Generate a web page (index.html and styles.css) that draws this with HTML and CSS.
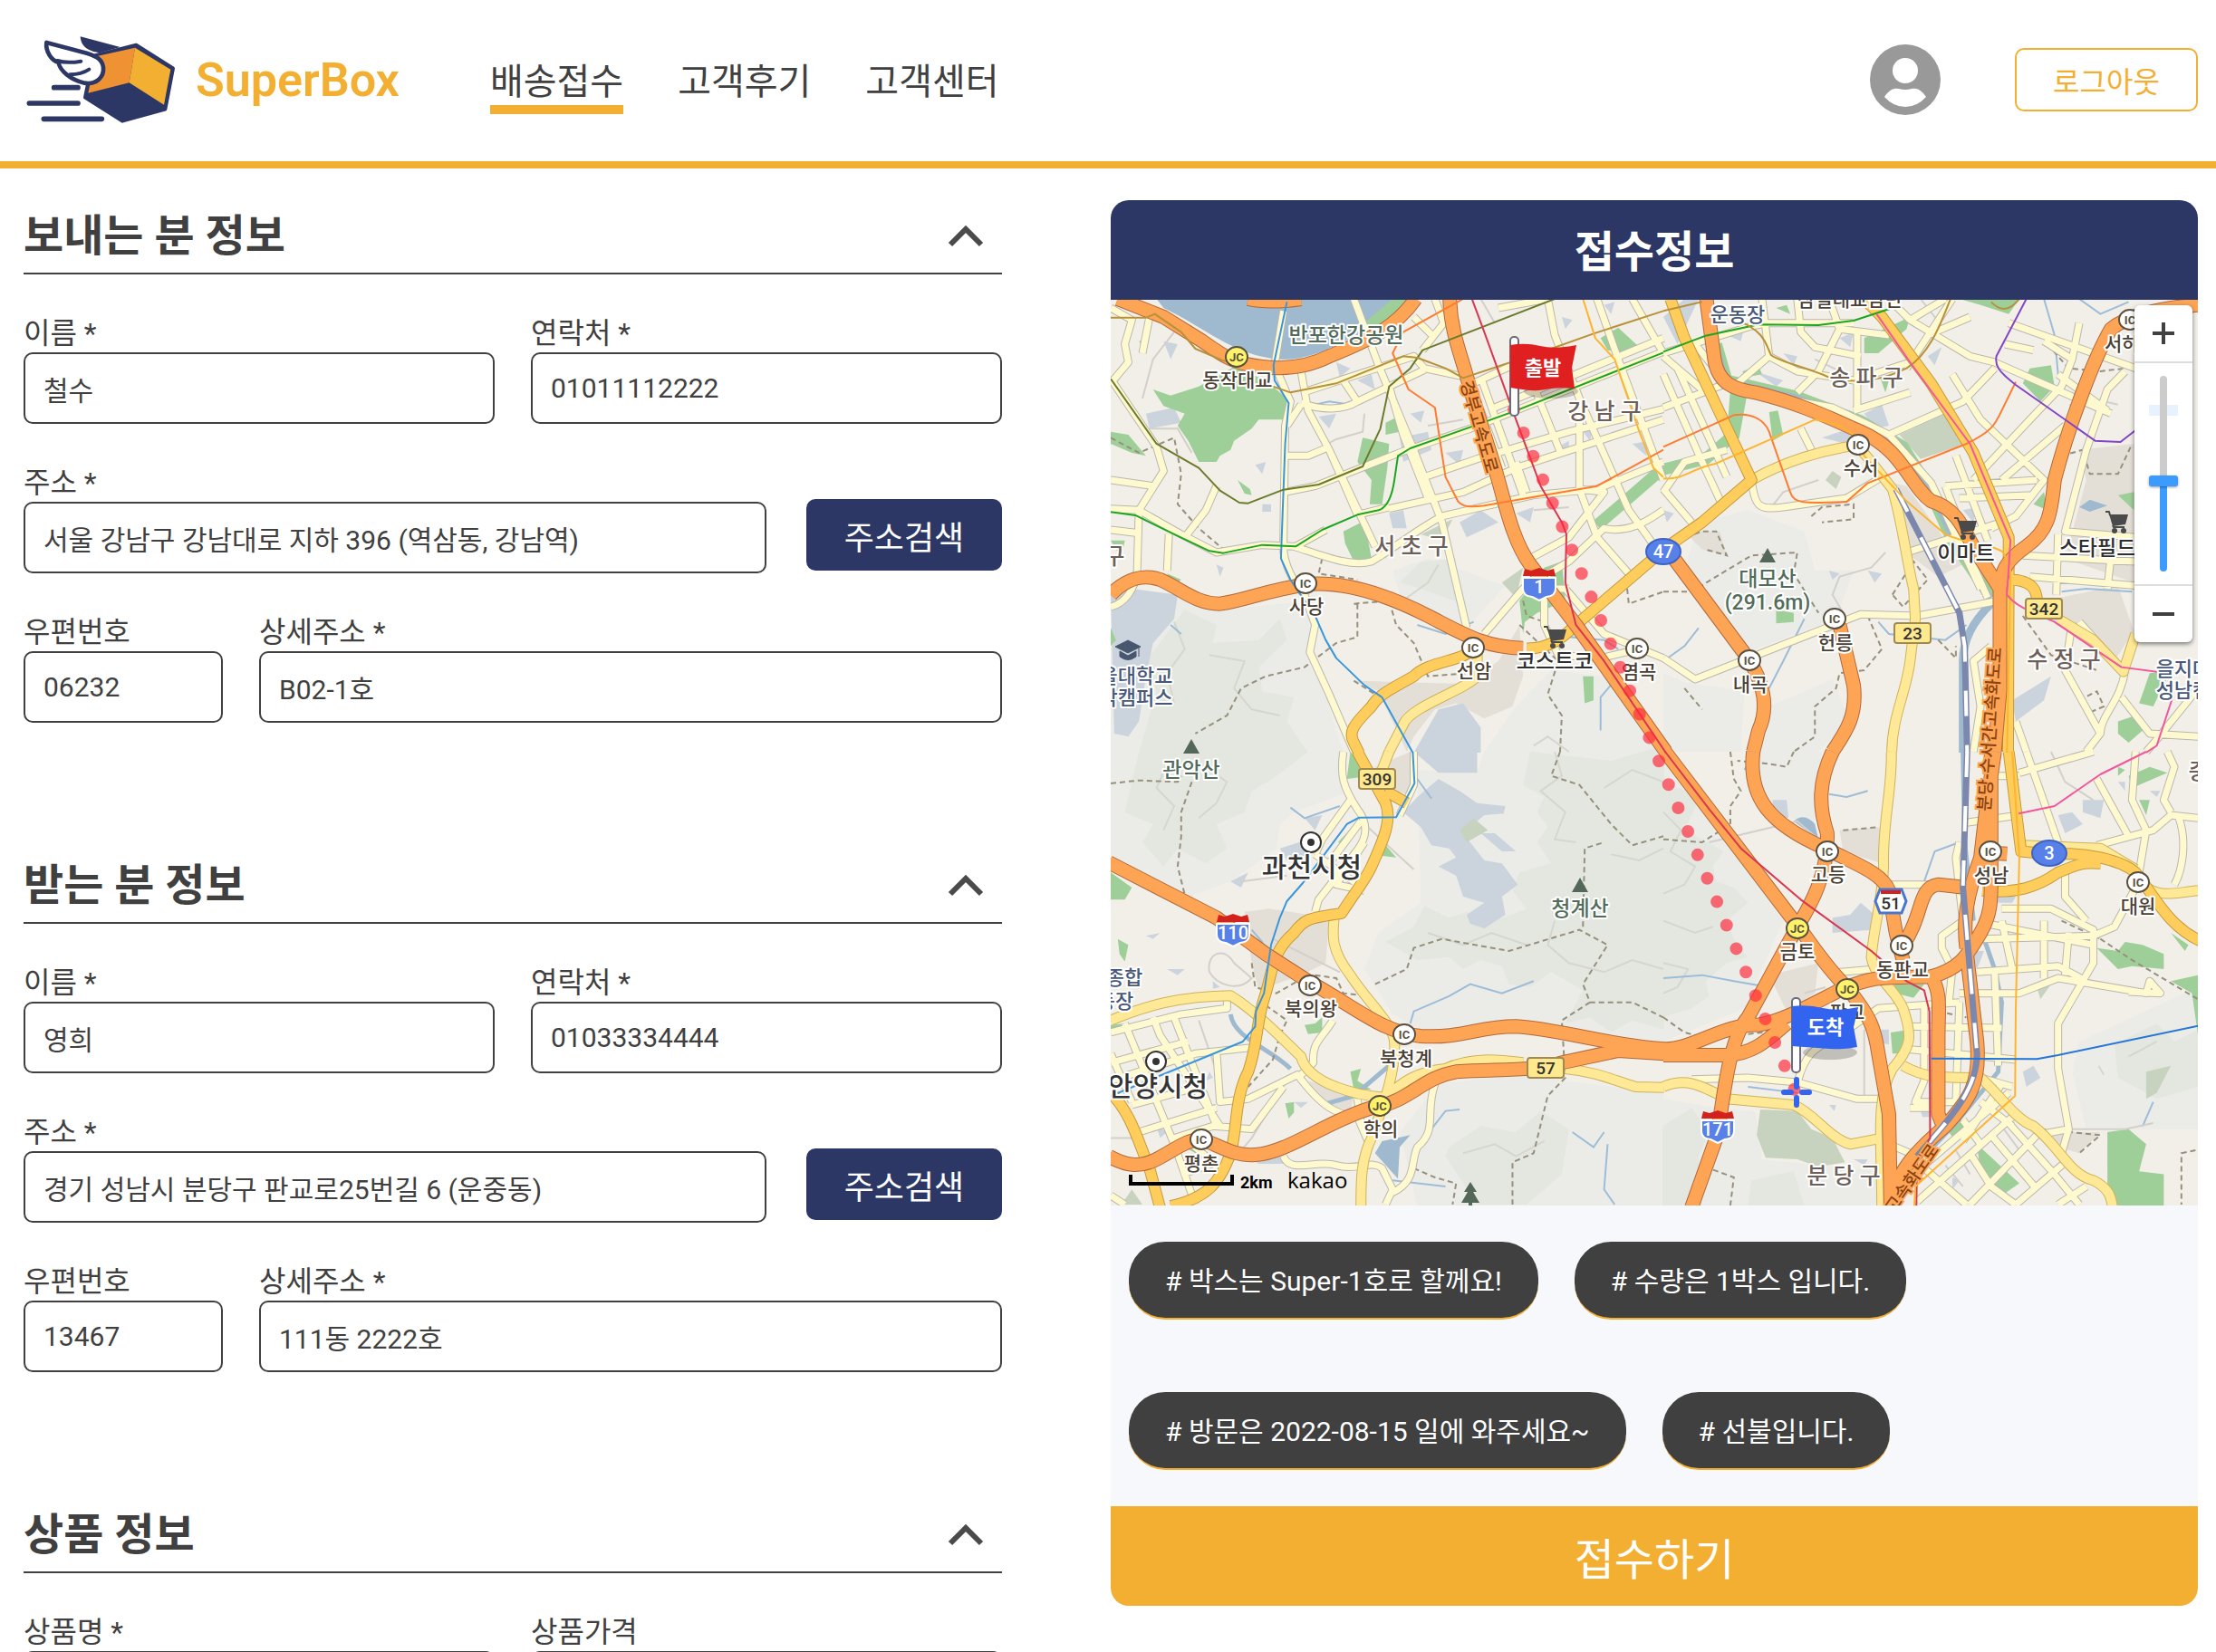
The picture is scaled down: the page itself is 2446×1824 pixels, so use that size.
FILE: index.html
```html
<!DOCTYPE html>
<html lang="ko">
<head>
<meta charset="utf-8">
<meta name="viewport" content="width=device-width, initial-scale=1">
<title>SuperBox - 배송접수</title>
<link rel="stylesheet" href="styles.css">
</head>
<body>
<header class="site-header">
  <a class="brand" href="#">
    <svg class="brand-logo" viewBox="78 52 510 309" aria-hidden="true">
      <path d="M266 62L398 97L330 116C300 112 268 100 266 62Z" fill="#2c3766"/>
      <path d="M310 126L451 90L573 167L547 303L405 342L282 264Z" fill="#2c3766" stroke="#2c3766" stroke-width="12" stroke-linejoin="round"/>
      <path d="M318 128L447 99L428 215L292 249Z" fill="#ef9234"/>
      <path d="M447 99L565 171L543 288L428 215Z" fill="#f3af31"/>
      <path d="M154 82C150 110 170 142 194 148C198 176 236 206 280 216C320 222 345 196 342 164C338 134 312 126 290 118Z" fill="#fff" stroke="#2c3766" stroke-width="14" stroke-linejoin="round"/>
      <path d="M190 142C215 150 245 148 268 144M232 188C258 188 278 182 295 171" fill="none" stroke="#2c3766" stroke-width="12" stroke-linecap="round"/>
      <path d="M179 231H258M97 283H258M145 335H337" stroke="#2c3766" stroke-width="17" stroke-linecap="round"/>
    </svg>
    <span>SuperBox</span>
  </a>
  <nav class="main-nav">
    <a class="active" href="#">배송접수</a>
    <a href="#">고객후기</a>
    <a href="#">고객센터</a>
  </nav>
  <a class="profile" href="#" aria-label="내 정보">
    <svg viewBox="0 0 78 78" aria-hidden="true"><circle cx="39" cy="39" r="39" fill="#999"/><circle cx="39" cy="29" r="14" fill="#fff"/><path d="M16 58C22 49 27 48 32 49Q39 51 46 49C51 48 56 49 62 58Q52 69 39 69T16 58Z" fill="#fff"/></svg>
  </a>
  <button class="logout" type="button">로그아웃</button>
</header>

<main class="page">
  <form class="order-form" id="order">
    <section class="form-section">
      <div class="section-head"><h2>보내는 분 정보</h2>
        <button type="button" aria-label="접기"><svg viewBox="0 0 40 24"><path d="M3 21L20 4L37 21"/></svg></button></div>
      <div class="row halves">
        <div class="field"><label for="s-name">이름 *</label><input id="s-name" value="철수"></div>
        <div class="field"><label for="s-tel">연락처 *</label><input id="s-tel" value="01011112222"></div>
      </div>
      <div class="row address">
        <div class="field"><label for="s-addr">주소 *</label><input id="s-addr" value="서울 강남구 강남대로 지하 396 (역삼동, 강남역)"></div>
        <button class="search" type="button">주소검색</button>
      </div>
      <div class="row detail">
        <div class="field"><label for="s-zip">우편번호</label><input id="s-zip" value="06232"></div>
        <div class="field"><label for="s-detail">상세주소 *</label><input id="s-detail" value="B02-1호"></div>
      </div>
    </section>
    <section class="form-section">
      <div class="section-head"><h2>받는 분 정보</h2>
        <button type="button" aria-label="접기"><svg viewBox="0 0 40 24"><path d="M3 21L20 4L37 21"/></svg></button></div>
      <div class="row halves">
        <div class="field"><label for="r-name">이름 *</label><input id="r-name" value="영희"></div>
        <div class="field"><label for="r-tel">연락처 *</label><input id="r-tel" value="01033334444"></div>
      </div>
      <div class="row address">
        <div class="field"><label for="r-addr">주소 *</label><input id="r-addr" value="경기 성남시 분당구 판교로25번길 6 (운중동)"></div>
        <button class="search" type="button">주소검색</button>
      </div>
      <div class="row detail">
        <div class="field"><label for="r-zip">우편번호</label><input id="r-zip" value="13467"></div>
        <div class="field"><label for="r-detail">상세주소 *</label><input id="r-detail" value="111동 2222호"></div>
      </div>
    </section>
    <section class="form-section">
      <div class="section-head"><h2>상품 정보</h2>
        <button type="button" aria-label="접기"><svg viewBox="0 0 40 24"><path d="M3 21L20 4L37 21"/></svg></button></div>
      <div class="row halves">
        <div class="field"><label for="p-name">상품명 *</label><input id="p-name"></div>
        <div class="field"><label for="p-price">상품가격</label><input id="p-price"></div>
      </div>
    </section>
  </form>

  <aside class="summary">
    <h2>접수정보</h2>
    <div class="map">
      <svg class="map-canvas" viewBox="0 0 1200 1000" preserveAspectRatio="xMinYMin slice">
        <defs>
          <g id="local">
            <g transform="matrix(.389 0 0 .3333 0 -1)">
              <path d="M495 640L580 620L830 505L1020 430L1568 175M790 695L1000 640L1150 560L1568 400M890 590L1040 530L1300 440L1568 365M545 310L860 190L890 230L1010 260M540 345C600 370 660 370 700 340L890 235M690 0L760 220L860 500L940 740L1010 1090M540 240L560 370L620 500L750 820M540 350L500 420M500 520L560 520L620 490M660 270L700 340M620 500L700 715M790 290L830 450L900 660M1050 260L1170 650M990 180L1110 560M1180 230L1280 520M1240 0L1260 120L1330 330L1470 700L1568 860M1090 360L1568 130M1010 290L1140 220M1380 0L1440 200L1568 600M1480 0L1568 180M1100 30L1240 0M920 0L945 80L885 170M860 60L920 130M1150 540L1180 640M1330 330L1330 630"/>
              <path d="M490 40L465 220L510 340L495 420L490 820C490 880 520 940 550 980L580 1080L565 1170L620 1310L690 1500M0 600L120 620M0 695L80 700L200 780L300 840L430 815L520 820C600 850 680 890 740 870C800 830 860 770 940 720L1200 650L1380 630L1568 540M0 30L60 70L40 150L50 210L0 280M110 60L90 180M0 265L130 490L150 570L80 700L75 900C70 960 40 1010 0 1020M160 900L165 780M0 765L70 775M300 620L270 700L210 790M1060 1110L1170 960L1300 870L1400 760C1480 780 1540 720 1568 700M1190 860L1300 790L1400 640L1330 630L1380 790L1470 910M1290 960L1400 1110L1568 1190M1390 1190L1500 1160M1230 980L1230 1080L1270 1180L1390 1190M1170 960L1300 960M525 820L610 765M700 715L790 690"/>
            </g>
            <g transform="matrix(.389 0 0 .3333 610 -1)">
              <path d="M0 180L250 90L300 80L540 80M90 150L180 280L0 360M280 0L300 190L210 280M300 190L380 240L540 270L700 210M380 0L390 110L430 160L560 190M470 0L500 100L640 120M700 70L870 190L940 210L1270 380M870 60L770 110M820 0L690 230M550 110L550 370M380 310L440 240L500 100M540 370L700 310M240 310L480 360L640 450L760 610L900 960M640 450L850 340L940 230M820 250L900 400L1080 600L1000 720L930 760M970 150L1050 170M1080 140L1160 200L1130 290L1040 400L880 600M980 80L1340 230M1310 240L1260 300L1200 500L1140 770L1340 790M1120 780L1115 980M1040 920L1340 950M1020 850L1340 870M1270 850L1260 960M1140 420L960 600M800 620L1060 600M840 660L1050 650M830 520L920 800M800 620L860 800M690 840L960 740M1180 80L1160 200M1120 250L1260 370M640 0L700 70L800 0M40 230L180 590M0 250L110 540L170 690M0 190L110 300M0 640L60 540L180 500"/>
              <path d="M0 1190L90 1260L560 1045L720 1050L860 1020L950 1000M0 630L80 740M250 600C260 690 270 700 340 690L520 660L620 590M390 430L420 500M930 1150L880 1200L900 1350L880 1500M1160 1070L1140 1230L1240 1440L1200 1500M1240 1440C1240 1380 1300 1330 1310 1230M1300 1320L1380 1440L1517 1450M1517 1290L1400 1460L1370 1500M840 780L920 990M1000 1400L1030 1500M1180 1070L1280 1200"/>
            </g>
            <g transform="matrix(.389 0 0 .3333 0 499)">
              <path d="M660 0C650 80 660 120 700 190C740 250 720 300 690 340L590 490L580 530M680 160L600 290L580 340M710 230L620 370M720 300L640 440L720 460M580 340L720 455M860 0L860 110L820 210M0 930L200 870L330 850L330 800M0 1030L220 960M0 1090L240 1000L400 980M60 1170L250 1110M80 1260L300 1180M40 900L180 1300L240 1500M120 880L140 940L310 1240M180 880L300 1240M300 990L310 1160L390 1150L530 1070C600 1180 640 1200 700 1210L730 1290M490 1110L400 1250L290 1240L180 1280M230 1300L280 1350M0 1000L60 1160M630 890C600 950 570 960 575 1030L540 1070M490 1340C510 1400 580 1350 640 1370C700 1390 740 1350 770 1380L800 1450L780 1500M920 1100C890 1200 930 1250 870 1310C850 1360 870 1420 800 1460M0 1470L40 1500M200 1400L300 1360M700 1150L710 1230"/>
            </g>
            <g transform="matrix(.389 0 0 .3333 610 499)">
              <path d="M80 1085L240 1080L380 1095L550 1150L610 1150M380 1100C400 1000 430 980 500 940L610 850L840 830M640 440L860 440M500 730L600 720M740 840L740 1090L715 1160L830 1160L840 830M690 910L960 915M690 985L1000 1020M940 720L950 1040M890 730L1120 710L1200 760M840 800L1010 800L1120 750L1370 800L1380 760L1410 800L1320 795M960 520L1100 520L1220 590L1220 700L1120 900L1120 1050L1150 1250L1130 1330M920 570L1220 640M900 620L1220 610M1080 560L1080 750M1150 600L1140 740M960 560L990 720M1140 380L1140 480L1200 560M1220 610L1280 580L1340 450M1010 70L1220 0M1030 0L1120 300M1230 90L1320 280M1340 0L1330 160L1370 260L1350 400M1230 310L1390 260L1440 210L1517 220M1460 210C1490 300 1470 400 1450 440M1430 0L1450 50L1420 160L1440 200M860 235L1010 210M930 80L1010 80M840 300L830 350L850 560L790 610L790 650L820 720L810 830"/>
              <path d="M740 1370L980 1130M720 1490L1000 1200M870 1330L930 1440L1000 1500M980 1230L1110 1400L1180 1500M850 1290L960 1100M640 1300L720 1340M870 1500L1060 1270L1150 1250M1000 1500L1140 1360M740 1380L860 1500M1120 1500L1200 1440M930 1270L1060 1450M900 1160L990 1240M850 1220L900 1300M770 1180L700 1180M900 1080L990 1110"/>
            </g>
          </g>
          <g id="sub">
            <path transform="matrix(.389 0 0 .3333 0 -1)" d="M1040 1170L1040 1250C1000 1300 850 1350 830 1410L790 1500"/>
            <path transform="matrix(.389 0 0 .3333 610 -1)" d="M250 600C340 540 450 500 550 485L590 540L650 630C680 750 690 870 710 960L715 1060L700 1200C690 1300 650 1380 648 1500M1120 1060L1220 1130L1305 1235L1340 1110"/>
            <path transform="matrix(.389 0 0 .3333 0 499)" d="M790 0L770 60M635 540C630 600 620 650 680 740C730 830 800 900 805 960C810 1050 780 1150 740 1280C710 1350 710 1420 710 1510M0 890C100 840 200 810 340 808C400 850 470 930 540 1010C560 1100 700 1140 780 1145C830 1090 870 1060 950 1050C1020 1010 1100 1020 1170 1030M1290 1050C1380 1060 1430 1090 1490 1110L1570 1112"/>
            <path transform="matrix(.389 0 0 .3333 610 499)" d="M647 0C650 120 620 250 625 380C620 500 600 560 590 680C600 750 660 790 680 850C710 950 700 980 650 1050C600 1150 620 1300 620 1510M0 1110C60 1080 100 1100 180 1150L370 1170C430 1200 470 1280 530 1300L620 1280M680 1040C740 1080 780 1080 900 1080C950 1130 1000 1220 1050 1240C1120 1300 1150 1400 1220 1420C1270 1450 1270 1480 1275 1510M1340 420C1400 490 1430 470 1517 460M1020 310L1240 320L1340 390"/>
          </g>
          <g id="trunk">
            <path transform="matrix(.389 0 0 .3333 0 -1)" d="M1180 1158C1260 1160 1300 1100 1330 1070L1570 830M1020 1165C1000 1200 900 1200 860 1250C800 1290 760 1310 740 1350C700 1400 670 1430 690 1470L705 1505"/>
            <path transform="matrix(.389 0 0 .3333 610 -1)" d="M20 0L60 130L250 600L110 740L0 830M570 0L620 60L760 280L880 510L980 790L978 1500M980 930C1050 930 1060 970 1060 1000"/>
            <path transform="matrix(.389 0 0 .3333 0 499)" d="M700 0L780 170C800 230 770 300 740 380C720 430 690 470 655 535C570 550 550 550 520 600C460 660 460 720 440 800C410 900 420 960 390 1060C350 1150 360 1250 340 1330C310 1430 270 1480 170 1505M780 130L840 170M0 1130C60 1200 80 1300 110 1380L140 1510"/>
            <path transform="matrix(.389 0 0 .3333 610 499)" d="M980 0L1015 330L1100 340C1200 330 1300 360 1340 400C1390 470 1430 580 1530 630M905 460C1000 470 1060 450 1120 400C1200 360 1200 370 1240 370"/>
          </g>
          <g id="express">
            <path transform="matrix(.389 0 0 .3333 0 -1)" d="M20 0L150 60L260 140C320 190 350 215 430 225C500 235 560 225 620 190C700 150 800 110 865 0M390 0Q450 15 540 0M962 0C965 120 1000 200 1020 300L1090 560C1120 680 1140 800 1190 880L1320 1080L1575 1500M0 980C40 930 90 910 140 930C200 960 240 1010 310 1010C380 1000 440 965 560 945C680 935 800 990 900 1050C1000 1110 1060 1155 1170 1157"/>
            <path transform="matrix(.389 0 0 .3333 610 -1)" d="M122 0L145 200C155 280 200 300 260 310C400 350 480 400 560 440C680 500 700 620 760 670C850 700 860 800 900 860L955 960L955 1300L940 1500M1517 20C1400 30 1310 60 1270 100C1220 200 1150 420 1110 600C1100 720 1090 770 1030 820C970 870 960 900 955 960M30 860L240 1190C300 1300 290 1380 270 1430L255 1500M500 1080L540 1280C550 1380 520 1430 480 1500"/>
            <path transform="matrix(.389 0 0 .3333 0 499)" d="M-5 367L300 550L440 670L560 760C700 850 770 930 880 942C1000 950 1040 910 1150 910C1280 920 1400 970 1570 985M-5 1340C40 1370 80 1380 130 1350C180 1320 220 1280 260 1285C320 1310 350 1340 410 1335C500 1330 620 1220 740 1180C850 1160 880 1080 980 1060C1100 1050 1200 1060 1280 1030L1440 990L1570 1000"/>
            <path transform="matrix(.389 0 0 .3333 610 499)" d="M5 0L370 560C400 600 450 700 520 780C590 880 600 920 610 1000L640 1200L645 1510M255 0C240 150 300 240 460 320C540 370 620 400 640 460L660 600L680 690M480 0C440 100 440 180 465 270C470 420 400 540 380 580L240 880C180 960 170 1180 150 1280L80 1510M0 985C80 990 170 900 270 905C340 890 400 850 500 790C600 740 620 750 760 745C840 720 860 680 900 600C930 540 930 490 930 430L930 0M940 0L915 200L900 350C860 480 850 560 860 650M0 1005L180 1005C260 1000 300 950 350 900M680 640C740 540 720 450 780 440L860 450M930 335L975 338M760 745C790 800 780 850 780 950L780 1200L790 1230M860 660L890 960C900 1100 870 1150 800 1240C720 1320 650 1400 650 1510"/>
          </g>
          <g id="rail">
            <path transform="matrix(.389 0 0 .3333 610 -1)" d="M660 630L840 1040L855 1150L862 1503"/>
            <path transform="matrix(.389 0 0 .3333 610 499)" d="M862 0L850 450L890 1000C890 1130 800 1230 720 1340"/>
          </g>
          <g id="ic"><ellipse rx="12" ry="11" fill="#fff" stroke="#5a5140" stroke-width="2"/><text class="ic-text" y="5">IC</text></g>
          <g id="jc"><ellipse rx="12" ry="11" fill="#fff36b" stroke="#5a5140" stroke-width="2"/><text class="ic-text" y="5">JC</text></g>
          <path id="peak" d="M0 -8L9 8H-9Z" fill="#54685a"/>
          <g id="cart"><path d="M-12 -11H-8L-7 -7M-4 4L-3 6H9" fill="none" stroke="#4a4a4a" stroke-width="2"/><path d="M-8 -8H13L10 3L-4 5Z" fill="#4a4a4a"/><circle cx="-2" cy="10" r="3" fill="#4a4a4a"/><circle cx="8" cy="10" r="3" fill="#4a4a4a"/></g>
          <g id="hall"><circle r="11" fill="#fff" stroke="#333" stroke-width="2"/><circle r="4" fill="#333"/></g>
          <g id="shield"><path d="M-18 -6H18V6Q18 14 8 15L0 19L-8 15Q-18 14 -18 6Z" fill="#5780e8" stroke="#fff" stroke-width="2"/><path d="M-18 -8L-16 -16L-9 -14L0 -17L9 -14L16 -16L18 -8Z" fill="#d3221d"/></g>
        </defs>

        <rect width="1200" height="1000" fill="#f2efe9"/>

        <g class="hills">
          <path transform="matrix(.389 0 0 .3333 0 -1)" d="M190 990L330 1030L560 1000L570 1170L660 1500H0V1100ZM800 900L900 860L1000 900L1120 950L1010 1090L820 980ZM1250 1230L1400 1250L1568 1500H1060L1150 1350Z"/>
          <path transform="matrix(.389 0 0 .3333 610 -1)" d="M100 740L240 700L400 770L430 900L540 900L490 1060L240 1170L60 900ZM60 1270L230 1300L220 1500H0V1240ZM300 1350L480 1260L530 1400L440 1500H280Z"/>
          <path transform="matrix(.389 0 0 .3333 0 499)" d="M0 0H650L660 140L520 200L480 240L470 320L340 430L220 480L0 350ZM870 60L1040 70L1060 0H1568V960L1150 900L880 920L800 870L720 720L760 600L880 500ZM820 1260L930 1100L1150 1070L1568 1130V1503H870Z"/>
          <path transform="matrix(.389 0 0 .3333 610 499)" d="M0 0L180 280L340 560L230 850L0 960ZM240 0H450L430 250L300 190ZM1180 960L1517 780V1250L1200 1250L1160 1060ZM0 1150L150 1180L260 1190L280 1350L620 1390V1503H0Z"/>
        </g>
        <g class="hills-deep">
          <path transform="matrix(.389 0 0 .3333 0 -1)" d="M210 1030L300 1080L290 1140L420 1130L480 1060L500 1130L420 1220L430 1300L520 1320L500 1400L560 1503H80L130 1300L100 1200ZM820 940L880 870L980 860L970 960L1000 1010L880 960Z"/>
          <path transform="matrix(.389 0 0 .3333 0 499)" d="M80 0H560L460 90L400 130L380 200L300 240L330 320L270 370L190 320L150 380L90 300L120 240L40 200L60 100ZM1190 0L1420 30L1570 -20V920L1480 890L1420 930L1360 880L1290 900L1340 790L1250 730L1190 780L1130 770L1110 710L1050 690L1000 720L960 680L870 690L780 630L860 580L890 510L960 550L1010 530L1090 560L1180 520L1140 460L1160 400L1250 370L1210 300L1240 250L1210 200L1230 150L1170 110ZM960 1310L1050 1240L1150 1260L1220 1190L1300 1250L1280 1400L1180 1500H1040L950 1340Z"/>
          <path transform="matrix(.389 0 0 .3333 610 499)" d="M-2 130L50 120L100 160L60 260L110 290L170 330L140 380L150 430L200 450L240 500L180 560L200 620L240 680L180 700L120 760L130 810L80 850L-2 880ZM1280 970L1400 900L1450 960L1517 920V1110L1400 1150L1290 1080ZM-2 1240L80 1180L130 1260L100 1340L110 1503H-2ZM250 1420L370 1390L400 1503H240Z"/>
        </g>
        <g class="contour">
          <path transform="matrix(.389 0 0 .3333 0 -1)" d="M180 1070L210 1160L160 1240L180 1340M280 1180L380 1200L350 1290L400 1360L480 1380M840 990L900 940L930 880M1200 1480L1240 1450L1300 1500"/>
          <path transform="matrix(.389 0 0 .3333 0 499)" d="M1260 0L1280 80L1220 130L1290 200L1260 290L1320 300M1400 120L1480 60L1568 100M1420 340L1500 360L1568 320M900 600L1000 640L1080 600L1180 640M1260 560L1240 640L1300 700L1400 730L1480 690L1568 720M160 40L130 120L180 180L150 260M280 60L330 100L300 170L250 220M1000 1330L1090 1300L1150 1340L1230 1290"/>
          <path transform="matrix(.389 0 0 .3333 610 499)" d="M0 200L50 260L20 330L90 380L60 440L0 470M0 560L90 600L140 580M0 700L70 720L40 780L0 800M1320 1010L1400 960M1235 1040L1250 1070"/>
        </g>
        <g class="soil">
          <path transform="matrix(.389 0 0 .3333 0 -1)" d="M690 1265L1000 1275L1100 1200L1160 1080L1170 1250L1140 1350L1060 1390L980 1340L920 1360L860 1450L840 1500L760 1300Z"/>
          <path transform="matrix(.389 0 0 .3333 610 -1)" d="M1180 500L1335 480V940L1140 860L1200 600ZM650 610L690 620L850 880L780 920L700 850ZM1040 1010L1290 950L1335 1100L1280 1200L1100 1060ZM60 770L160 770L180 850L110 830Z"/>
          <path transform="matrix(.389 0 0 .3333 0 499)" d="M380 530L450 520L620 550L610 700L540 740L420 790L400 700ZM750 50L850 0L850 140L780 130ZM560 1090L690 1140L680 1190L600 1160Z"/>
          <path transform="matrix(.389 0 0 .3333 610 499)" d="M500 260L620 250L620 370L510 330ZM1080 1260L1240 1260L1180 1330L1120 1310ZM300 740L440 700L430 800L350 860Z"/>
        </g>
        <g class="lake">
          <path transform="matrix(.389 0 0 .3333 0 -1)" d="M0 980L60 960L190 980L180 1060L120 1140L100 1250L80 1400L50 1450L10 1440ZM860 1503L930 1360L1000 1340L1050 1420L1050 1503ZM100 380L180 360L200 410L110 430ZM820 460L900 440L910 500L830 540ZM990 740L1050 700L1100 740L1010 790ZM790 710L830 700L840 760L800 760ZM700 270L740 250L750 300ZM590 390L640 380L620 430ZM150 140L190 150L170 200ZM850 380L890 370L880 410ZM950 510L1000 500L990 550ZM1280 60L1310 70L1290 100ZM1400 20L1430 10L1420 50ZM1480 480L1530 470L1520 520ZM1150 710L1200 690L1190 740ZM430 680L455 680V705H430ZM300 880L320 890L310 920ZM250 340L290 350L270 370ZM640 210L680 230L650 260ZM1340 440L1370 420L1360 470ZM1270 490L1300 470L1300 510ZM410 550L440 540L430 580Z"/>
          <path transform="matrix(.389 0 0 .3333 610 -1)" d="M0 60L60 0H100L40 150ZM500 440L550 430L520 480L450 460ZM570 380L620 350L640 420L600 430ZM500 130L540 110L530 160ZM750 190L790 160L770 220ZM990 1330L1100 1250L1080 1330L1000 1400ZM580 900L620 910L600 940ZM850 700L890 690L880 740ZM340 180L380 190L370 220ZM260 240L340 270L320 290ZM180 120L230 90L220 140ZM1150 350L1180 340L1170 380ZM0 700L30 710L10 740ZM470 900L500 910L480 930Z"/>
          <path transform="matrix(.389 0 0 .3333 0 499)" d="M830 200L870 150L930 90L990 130L1040 170L1120 180L1115 205L1060 210L1000 270L1060 360L1110 370L1155 440L1110 480L1120 540L1060 585L1020 570L1010 540L1060 500L1000 480L980 410L930 380L980 350L960 320L910 310L880 250ZM860 0H1040V70H930ZM1050 270L1090 270L1150 330L1110 330ZM480 320L560 290L550 370L500 360ZM340 430L390 400L370 450ZM550 220L600 210L580 260ZM100 610L140 600L120 620ZM160 720L210 720L190 740ZM290 760L310 780L290 785ZM400 1350L490 1340L500 1365L420 1365ZM130 1240L160 1260L140 1280ZM520 1160L560 1160L540 1180ZM280 1060L290 1080L270 1090Z"/>
          <path transform="matrix(.389 0 0 .3333 610 499)" d="M480 550L530 540L560 500L600 540L590 590L480 600ZM310 160L350 160L355 220L310 210ZM1120 210L1160 200L1190 240L1140 270ZM1190 160L1250 160L1240 220L1190 200ZM860 660L910 660L890 720ZM1020 1060L1050 1040L1070 1080L1030 1110ZM600 920L640 920L640 970L600 960ZM730 1190L755 1190L755 1210L735 1210ZM540 1350L580 1350L570 1370ZM1290 100L1310 100L1310 130ZM1380 130L1410 130L1400 150ZM470 1170L490 1170L485 1190ZM940 470L1000 480L990 500H950ZM820 1410L840 1420L820 1450Z"/>
        </g>
        <g class="water">
          <path transform="matrix(.389 0 0 .3333 0 -1)" d="M130 0H850C800 80 730 110 680 130C600 180 540 205 480 200C350 190 260 90 150 30Z"/>
          <path transform="matrix(.389 0 0 .3333 0 499)" d="M770 1290L850 1270L820 1310L815 1415L750 1330Z"/>
          <path transform="matrix(.389 0 0 .3333 610 499)" d="M370 230Q400 200 430 240L440 290ZM1300 1310L1340 1340L1300 1450L1280 1400Z"/>
          <path transform="matrix(.389 0 0 .3333 610 -1)" d="M1180 690L1210 665L1260 685L1210 705Z"/>
        </g>
        <g class="park">
          <path transform="matrix(.389 0 0 .3333 0 -1)" d="M120 300L170 320L250 290L350 225L440 270L510 340L490 400L420 400L400 430L350 470L340 500L310 520L300 540L250 540L220 470L190 420L210 380L150 355ZM715 460L790 480L785 560L770 680L735 680L740 600L700 540ZM780 410L815 390L820 440L780 450ZM660 770L720 735L740 860L690 870L665 810ZM1390 130L1440 95L1500 160L1480 180L1410 170ZM1160 1000L1230 890L1280 870L1290 1000L1210 1040L1175 1070L1170 1110ZM360 600L395 630L400 650L380 645ZM0 440L50 450L100 520L60 510L0 480ZM80 140L110 130L100 170ZM700 100L800 0L840 0L790 70L720 110ZM1340 1250L1370 1250L1370 1330L1345 1340ZM0 1090L15 1130L0 1150ZM0 800L40 800L30 860ZM160 910L200 930L180 950Z"/>
          <path transform="matrix(.389 0 0 .3333 610 -1)" d="M570 130L700 60L690 100L610 180H570ZM1020 280L1040 230L1100 220L1110 290L1070 340ZM840 0H1010L980 50L900 20ZM300 375L325 370L340 450L310 470ZM320 1030L370 1040L370 1070L320 1075ZM1350 1340L1380 1240L1440 1230L1390 1350ZM1290 1400L1340 1380L1360 1430L1320 1470L1290 1440ZM225 240L270 220L280 250L230 260ZM320 30L350 20L360 50ZM615 260L640 270L630 310ZM1050 680L1080 640L1090 700ZM1290 650L1335 640V700ZM190 300L230 330L215 420L180 450Z"/>
          <path transform="matrix(.389 0 0 .3333 0 499)" d="M0 400L60 450L40 490H0ZM680 0L710 30L740 80L670 90ZM710 220L670 310L645 300ZM780 310L810 350L770 345ZM550 905L580 900L600 880L600 930L560 935ZM20 620L50 640L40 695L25 670ZM495 1165L520 1160L520 1195L505 1215ZM680 1060L710 1050L700 1090L740 1120L690 1120ZM210 1310L260 1310L240 1330ZM0 905L40 900L0 930Z"/>
          <path transform="matrix(.389 0 0 .3333 610 499)" d="M1230 650L1290 660L1310 630L1360 640L1420 670V720L1330 710L1290 720ZM1440 760L1517 740V940L1500 800ZM1440 600L1490 640L1480 660ZM1260 1260L1320 1250L1370 1300L1350 1390L1420 1400V1503H1290L1260 1450ZM890 1300L1010 1430L960 1470L900 1400ZM655 770L740 770L710 815L660 800ZM645 930L700 920L690 1000L650 1000ZM1320 80L1380 50L1430 70L1330 120ZM1350 160L1380 160L1370 210ZM810 1260L840 1210L860 1250L830 1290ZM1290 50L1310 60L1290 80Z"/>
        </g>
        <g class="meadow">
          <path transform="matrix(.389 0 0 .3333 610 -1)" d="M670 450L820 370L860 480L730 530ZM460 600L480 570L505 590L490 630Z"/>
          <path transform="matrix(.389 0 0 .3333 0 -1)" d="M1110 940L1170 890L1150 990ZM880 780L970 730L940 800Z"/>
          <path transform="matrix(.389 0 0 .3333 0 499)" d="M990 260L1030 220L1070 260L1010 300ZM30 1500L60 1450L90 1500Z"/>
          <path transform="matrix(.389 0 0 .3333 610 499)" d="M275 1185L380 1190L420 1250L480 1280L515 1360L440 1375L380 1350L290 1345L265 1270ZM1370 1060L1440 1040L1400 1130L1370 1150ZM1060 780L1100 770L1070 820Z"/>
        </g>

        <g class="riverside" transform="matrix(.389 0 0 .3333 610 -1)">
          <path class="bank" d="M150 150L180 270L380 325L560 405L680 490L750 620L820 800L930 990M0 565L120 530L200 450L220 320"/>
          <path class="stream" d="M150 150L180 270L380 325L560 405L680 490L750 620L820 800L930 990"/>
          <path class="stream wide" d="M930 1010Q850 1100 850 1200V1503"/>
        </g>
        <path class="bank" transform="matrix(.389 0 0 .3333 0 -1)" d="M1568 560L1470 660L1380 750"/>
        <g class="stream">
          <path transform="matrix(.389 0 0 .3333 0 499)" d="M340 870C350 950 450 980 510 1050M600 1170L690 1140L790 1040"/>
          <path transform="matrix(.389 0 0 .3333 610 499)" d="M850 0L855 300L880 560M910 620L940 720L960 830L950 1060L830 1230L740 1340"/>
        </g>
        <g class="creek">
          <path transform="matrix(.389 0 0 .3333 0 499)" d="M510 185L550 220L650 180M850 900L860 860L960 810L1020 770L1110 800L1200 760M400 590L430 630L440 670M910 1250L950 1190L990 1185M1310 1260L1370 1310L1400 1260M1410 1300L1400 1450L1430 1500M870 90L910 155M800 1420L950 1440"/>
          <path transform="matrix(.389 0 0 .3333 610 499)" d="M470 140L520 150L580 130M740 430L770 330L840 300M230 60L260 0M0 750L110 740L200 760L300 780M1360 1240L1390 1160M240 1110L380 1130"/>
          <path transform="matrix(.389 0 0 .3333 610 -1)" d="M100 1090L60 1150L0 1200M400 1060L340 1200L300 1290M1080 0L1110 120L1120 250M610 1070L640 1110L800 1130L860 1080M1130 970L1200 960L1330 970M1180 0L1240 50L1320 10"/>
          <path transform="matrix(.389 0 0 .3333 0 -1)" d="M870 1080L950 1110L1030 1070M1300 1120L1400 1130L1440 1160M170 1080L200 1110M1440 1250L1390 1320L1390 1430M580 350L620 340L680 350"/>
        </g>
        <g class="minor">
          <path transform="matrix(.389 0 0 .3333 0 -1)" d="M110 430L190 430L230 510M600 490L640 465L715 440L720 380M180 110L120 200L90 330M900 420L1000 400M1200 700L1300 690M1050 0L1090 80"/>
          <path transform="matrix(.389 0 0 .3333 610 -1)" d="M630 840L590 890L500 920L480 980L520 1060M300 700L340 640L440 600M730 0L790 90M1180 320L1290 350M430 200L520 250"/>
          <path transform="matrix(.389 0 0 .3333 0 499)" d="M280 730C270 670 320 640 350 700L400 750C360 800 300 770 280 730M370 430L500 410M460 620L650 730M500 1090L400 1280L320 1390M730 250L860 390M250 890L300 1060M0 1280L80 1280"/>
          <path transform="matrix(.389 0 0 .3333 610 499)" d="M130 300L380 230L450 300M570 920V1140M1150 1250L1310 1250L1390 1230M460 780L400 800M1100 0L1140 100L1220 160M830 1320L870 1400M800 1370L850 1440M960 1240L1010 1320"/>
        </g>
        <g class="trail">
          <path transform="matrix(.389 0 0 .3333 0 -1)" d="M690 1010L790 1000L810 1080L860 1140L900 1250L1010 1240M700 1010L700 1120L640 1140L550 1220L440 1250L370 1290L330 1380L240 1440M0 460L80 510L180 460L200 580L190 680L250 760L320 830M690 1265L750 1310M1160 1080L1270 1200L1240 1310L1280 1380L1275 1500M600 860L590 910L700 930M1170 1000L1180 1050L1230 1070M1460 900L1470 1010L1568 970"/>
          <path transform="matrix(.389 0 0 .3333 610 -1)" d="M0 970L80 970L150 920L250 850L380 840L370 910L440 1040M650 980L710 870L750 930L680 1020ZM580 1050L620 1160L570 1230L500 1240L490 1290L430 1350V1450L370 1500M60 1290L110 1360M420 720L450 690L540 680L540 730L450 740M1130 520L1190 500L1210 580L1290 580L1330 480M1150 860L1320 880M780 1130L830 1190V1150M1090 150L1150 230L1240 240L1310 230M40 800L110 770L150 770L180 850L120 830M1020 1050L1100 1180L1230 1230M1180 1330L1230 1300L1250 1350L1210 1370"/>
          <path transform="matrix(.389 0 0 .3333 0 499)" d="M0 105L80 95L190 100L200 80M230 100L200 200V280L190 380L220 520L300 560M1275 0L1250 80L1330 110L1420 240L1480 310L1568 280M750 770L840 720L860 650L940 620L1130 660L1330 590L1410 640L1340 770L1360 830L1480 830L1568 880M1340 580L1345 320L1400 300M1360 830L1280 890L1290 1080L1240 1140L1200 1330L1140 1360V1500M440 840L500 890L480 940L460 1020L390 1110M580 740L640 750L660 800L740 810M860 1380L920 1410L980 1430L970 1500M400 700L410 780L470 800L560 740"/>
          <path transform="matrix(.389 0 0 .3333 610 499)" d="M370 0L350 50L300 40L210 30M190 0L200 90L220 130L190 180V240L110 300L0 290M0 880L60 930L130 950L280 930L330 920M1240 620L1330 690L1517 820M100 1480L130 1380L200 1410L190 1503M1510 1320L1470 1330V1500M510 260L610 250M1070 1250L1240 1270L1180 1330M780 860L860 880M1130 560L1240 620"/>
        </g>

        <use href="#local" class="local-case"/><use href="#local" class="local-fill"/>
        <use href="#sub" class="sub-case"/><use href="#sub" class="sub-fill"/>
        <use href="#trunk" class="trunk-case"/><use href="#trunk" class="trunk-fill"/>
        <use href="#express" class="express-case"/><use href="#express" class="express-fill"/>
        <use href="#rail" class="rail-base"/><use href="#rail" class="rail-dash"/>

        <g class="subway">
          <g transform="matrix(.389 0 0 .3333 0 -1)">
            <path stroke="#3a96dc" d="M500 10L462 220L465 270L505 345L495 480L483 860L510 930L580 1050L610 1130L640 1190L720 1280L770 1320L857 1503"/>
            <path stroke="#1ca61f" d="M0 706L70 717L180 780L280 835L320 842L430 815L525 820L600 765L700 715L760 700C790 690 800 640 805 600L815 520L850 495L1020 425L1150 370L1568 178"/>
            <path stroke="#6b7a2b" d="M0 265L130 480L250 560L310 635L365 675L390 677L490 632L590 615L715 555L765 430L790 290L850 230L885 170L1260 0"/>
            <path stroke="#b8913a" d="M0 62L100 62L125 50L200 110L240 165L320 205L360 210M460 290L510 310L640 280L830 190L870 195L950 230L1000 262L1250 165L1370 115L1568 40"/>
            <path stroke="#ff7b30" d="M1000 0L830 110L800 180L845 300L920 360L950 590L985 670C1000 690 1020 690 1060 685L1230 650L1380 620L1568 500"/>
            <path stroke="#d93650" d="M1025 0L1060 110L1150 400L1220 620L1280 740L1293 780L1290 940L1320 1080L1400 1200L1575 1503"/>
            <path stroke="#ffb42e" d="M1340 0L1375 130L1430 200L1500 440L1540 560L1568 590"/>
          </g>
          <g transform="matrix(.389 0 0 .3333 610 -1)">
            <path stroke="#1ca61f" d="M0 175L120 122L270 85L440 87L540 72L650 30"/>
            <path stroke="#b8913a" d="M0 40L110 10M210 70C290 110 290 150 305 185C330 210 420 230 480 265C560 280 620 270 690 230C760 180 790 70 815 0M930 10Q970 60 1010 0"/>
            <path stroke="#ff7b30" d="M0 490L200 385C260 375 290 410 300 440L360 640C370 680 400 678 520 672L580 610L860 480C930 440 940 420 960 370L1000 275"/>
            <path stroke="#ffb42e" d="M0 595C60 600 80 560 150 545L430 400C540 420 560 470 570 520L690 670L800 780C850 810 930 810 965 840L985 900L975 1503"/>
            <path stroke="#f2569c" d="M605 50L700 210L870 480L985 800L975 980C1000 1020 1050 1040 1110 1070L1300 1220L1430 1240L1445 1320L1400 1480L1370 1503"/>
            <path stroke="#8444c8" d="M1030 0L945 190C940 220 950 240 1000 285L1225 470L1297 474L1340 435"/>
          </g>
          <path stroke="#3a96dc" transform="matrix(.389 0 0 .3333 0 499)" d="M857 0L862 105L810 217L705 218L670 240L600 350L545 435L500 495L480 550L455 640L435 800L412 860L410 910L375 960L230 1030L0 1140"/>
          <g transform="matrix(.389 0 0 .3333 610 499)">
            <path stroke="#d93650" d="M5 0L130 190L220 320L390 490L590 660L690 760L740 790L755 860L757 1280L720 1350L718 1503"/>
            <path stroke="#ffb42e" d="M990 0L1010 350L1000 850L998 1140L715 1440L712 1503"/>
            <path stroke="#f2569c" d="M1008 205L1110 180L1240 75L1370 0"/>
            <path stroke="#2477d8" d="M760 1016L1060 1018L1120 1005L1517 908"/>
          </g>
        </g>

        <g class="road-name">
          <text transform="translate(407 140) rotate(74)" y="7">경부고속도로</text>
          <text transform="translate(970 474) rotate(-86)" y="7">분당-수서간고속화도로</text>
          <text transform="translate(884 970) rotate(-55)" y="7">고속화도로</text>
        </g>

        <use href="#jc" x="139" y="63"/><use href="#ic" x="215" y="313"/><use href="#ic" x="400" y="384"/><use href="#ic" x="581" y="385"/>
        <use href="#ic" x="825" y="160"/><use href="#ic" x="1125" y="22"/><use href="#ic" x="799" y="352"/><use href="#ic" x="705" y="398"/>
        <use href="#ic" x="220" y="757"/><use href="#ic" x="324" y="811"/><use href="#jc" x="297" y="890"/><use href="#ic" x="100" y="927"/>
        <use href="#ic" x="791" y="609"/><use href="#ic" x="971" y="609"/><use href="#ic" x="1134" y="643"/><use href="#jc" x="758" y="694"/>
        <use href="#ic" x="873" y="713"/><use href="#jc" x="813" y="761"/>
        <use href="#peak" x="89" y="493"/><use href="#peak" x="725" y="282"/><use href="#peak" x="518" y="646"/>
        <path d="M397 974L404 985H400L407 997H399V1000H395V997H387L394 985H390Z" fill="#54685a"/>
        <use href="#cart" x="490" y="372"/><use href="#cart" x="943" y="252"/><use href="#cart" x="1110" y="245"/>
        <use href="#hall" x="221" y="599"/><use href="#hall" x="50" y="841"/>
        <path d="M19 376L33 383L19 390L5 383ZM10 388L19 393L28 388V394Q19 401 10 394ZM31 384V394" fill="#48566e" stroke="#48566e"/>

        <g class="place">
          <text x="140" y="96">동작대교</text><text x="216" y="346">사당</text><text x="401" y="417">선암</text><text x="583" y="418">염곡</text>
          <text x="828" y="193">수서</text><text x="1126" y="56">서하남</text><text x="800" y="386">헌릉</text><text x="706" y="432">내곡</text>
          <text x="221" y="790">북의왕</text><text x="326" y="845">북청계</text><text x="298" y="923">학의</text><text x="100" y="961">평촌</text>
          <text x="792" y="642">고등</text><text x="972" y="643">성남</text><text x="1134" y="677">대원</text><text x="758" y="727">금토</text>
          <text x="874" y="747">동판교</text><text x="813" y="794">판교</text><text x="816" y="7">잠실대교남단</text>
        </g>
        <g class="place shop"><text x="490" y="407">코스트코</text><text x="944" y="288">이마트</text><text x="1089" y="282">스타필드</text></g>
        <g class="place city"><text x="222" y="637">과천시청</text><text x="52" y="879">안양시청</text></g>
        <g class="place district">
          <text x="545" y="132">강 남 구</text><text x="332" y="281">서 초 구</text><text x="834" y="95">송 파 구</text><text x="1052" y="406">수 정 구</text>
          <text x="809" y="976">분 당 구</text><text x="4" y="292">구</text><text x="1201" y="530">중</text>
        </g>
        <g class="place green"><text x="260" y="47">반포한강공원</text><text x="89" y="527">관악산</text><text x="725" y="316">대모산</text><text x="725" y="342">(291.6m)</text><text x="518" y="680">청계산</text></g>
        <g class="place school"><text x="28" y="423">을대학교</text><text x="28" y="447">악캠퍼스</text><text x="692" y="24">운동장</text><text x="15" y="756">종합</text><text x="5" y="782">동장</text><text x="1184" y="415">을지대</text><text x="1184" y="439">성남캠</text></g>

        <g class="plate">
          <rect x="274" y="518" width="40" height="22" rx="3"/><text x="294" y="536">309</text>
          <rect x="460" y="837" width="40" height="22" rx="3"/><text x="480" y="855">57</text>
          <rect x="865" y="357" width="40" height="22" rx="3"/><text x="885" y="375">23</text>
          <rect x="1010" y="330" width="40" height="22" rx="3"/><text x="1030" y="348">342</text>
        </g>
        <g class="route">
          <use href="#shield" x="473" y="313"/><text x="473" y="324">1</text>
          <use href="#shield" x="135" y="695"/><text x="135" y="706">110</text>
          <use href="#shield" x="670" y="912"/><text x="670" y="923">171</text>
          <ellipse cx="610" cy="278" rx="19" ry="14"/><text x="610" y="285">47</text>
          <ellipse cx="1036" cy="611" rx="19" ry="14"/><text x="1036" y="618">3</text>
        </g>
        <path d="M849 651H873L878 664L873 677H849L844 664Z" fill="#fff" stroke="#4a76cf" stroke-width="3"/><path d="M850 652H872V656H850Z" fill="#d3221d"/><text class="plain" x="861" y="673">51</text>

        <path class="route-dots" d="M445 121L755 873"/>

        <g class="flag">
          <ellipse cx="486" cy="101" rx="30" ry="8" fill="#000" opacity=".2"/>
          <rect x="441" y="41" width="9" height="87" rx="4" fill="#fff" stroke="#6b6b80" stroke-width="2"/>
          <path d="M441 50Q458 47 474 51T514 50L509 75L512 98Q492 96 480 99T441 97Z" fill="#e02020"/>
          <text x="477" y="83">출발</text>
          <ellipse cx="794" cy="831" rx="30" ry="8" fill="#000" opacity=".2"/>
          <rect x="752" y="771" width="9" height="82" rx="4" fill="#fff" stroke="#6b6b80" stroke-width="2"/>
          <path d="M752 780Q770 778 786 782T825 781L820 803L824 825Q808 828 794 827T752 824Z" fill="#3264f0"/>
          <text x="789" y="811">도착</text>
          <path d="M757 861V869M757 881V889M743 875H751M763 875H771" stroke="#3264f0" stroke-width="6" stroke-linecap="round"/>
        </g>

        <path d="M22 966V976H134V966" fill="none" stroke="#000" stroke-width="4"/>
        <text class="scale" x="143" y="981">2km</text>
        <text class="provider" x="195" y="981">kakao</text>
      </svg>
      <div class="zoom">
        <button type="button" aria-label="확대"><svg viewBox="0 0 24 24"><path d="M0 12H24M12 0V24"/></svg></button>
        <div class="zoom-range"><input type="range" min="0" max="100" value="46" aria-label="지도 확대 수준"></div>
        <button type="button" aria-label="축소"><svg viewBox="0 0 24 24"><path d="M0 12H24"/></svg></button>
      </div>
    </div>
    <ul class="tags">
      <li># 박스는 Super-1호로 할께요!</li>
      <li># 수량은 1박스 입니다.</li>
      <li># 방문은 2022-08-15 일에 와주세요~</li>
      <li># 선불입니다.</li>
    </ul>
    <button class="submit" type="submit" form="order">접수하기</button>
  </aside>
</main>
</body>
</html>
```
FILE: styles.css
```css
:root {
  --navy: #2c3766;
  --amber: #f3af31;
  --ink: #404040;
}
* { box-sizing: border-box; }
body {
  margin: 0;
  height: 100vh;
  display: flex;
  flex-direction: column;
  overflow: hidden;
  background: #fff;
  color: var(--ink);
  font-family: Roboto, "Noto Sans CJK KR", sans-serif;
}
button, input { font: inherit; color: inherit; }
button { cursor: pointer; border: 0; padding: 0; background: none; }
h2 { margin: 0; font-size: 48px; font-weight: 600; line-height: 72px; }
a { color: inherit; text-decoration: none; }

/* header */
.site-header {
  flex: none;
  display: flex;
  align-items: center;
  height: 186px;
  padding: 0 20px 2px 26px;
  border-bottom: 8px solid var(--amber);
}
.brand {
  display: flex;
  align-items: center;
  gap: 20px;
  color: var(--amber);
  font-size: 52px;
  font-weight: 600;
}
.brand-logo { width: 170px; height: 103px; }
.main-nav { display: flex; gap: 60px; margin-left: 100px; }
.main-nav a {
  padding-top: 16px;
  border-bottom: 10px solid transparent;
  font-size: 40px;
  line-height: 50px;
}
.main-nav .active { border-color: var(--amber); }
.profile { width: 78px; height: 78px; margin-left: auto; }
.profile svg { display: block; }
.logout {
  height: 70px;
  width: 202px;
  margin-left: 82px;
  border: 2px solid var(--amber);
  border-radius: 10px;
  color: var(--amber);
  font-size: 32px;
}

/* page */
.page {
  flex: 1;
  min-height: 0;
  display: grid;
  grid-template-columns: 9fr 10fr;
  gap: 120px;
  padding: 0 20px 0 26px;
}
.order-form {
  min-height: 0;
  overflow-y: auto;
  scrollbar-width: none;
  padding-top: 39px;
  display: flex;
  flex-direction: column;
  gap: 144px;
}
.form-section { display: flex; flex-direction: column; gap: 40px; }
.section-head {
  display: flex;
  align-items: center;
  justify-content: space-between;
  padding: 0 20px 4px 0;
  border-bottom: 2px solid var(--ink);
}
.section-head svg {
  display: block;
  width: 40px;
  height: 24px;
  fill: none;
  stroke: #4a4a4a;
  stroke-width: 6;
}
.row { display: grid; gap: 40px; align-items: end; }
.halves { grid-template-columns: 1fr 1fr; }
.address { grid-template-columns: 1fr 216px; gap: 44px; }
.detail { grid-template-columns: 220px 1fr; }
.field { display: flex; flex-direction: column; }
.field label { padding-top: 4px; font-size: 32px; line-height: 42px; }
.field input {
  width: 100%;
  height: 79px;
  padding: 0 20px;
  border: 2px solid var(--ink);
  border-radius: 10px;
  background: #fff;
  font-size: 30px;
}
.search {
  height: 79px;
  margin-bottom: 3px;
  border-radius: 10px;
  background: var(--navy);
  color: #fff;
  font-size: 36px;
}

/* summary panel */
.summary { padding-top: 35px; }
.summary h2 {
  padding-top: 6px;
  border-radius: 20px 20px 0 0;
  background: var(--navy);
  color: #fff;
  line-height: 104px;
  text-align: center;
}
.tags {
  display: flex;
  flex-wrap: wrap;
  gap: 80px 40px;
  margin: 0;
  padding: 40px 25% 40px 20px;
  list-style: none;
  background: #f7f8fc;
}
.tags li {
  padding: 4px 40px 0;
  border-bottom: 2px solid var(--amber);
  border-radius: 40px;
  background: var(--ink);
  color: #fff;
  font-size: 30px;
  line-height: 80px;
  white-space: nowrap;
}
.submit {
  display: block;
  width: 100%;
  height: 110px;
  border-radius: 0 0 20px 20px;
  background: var(--amber);
  color: #fff;
  font-size: 48px;
}

/* map */
.map { position: relative; height: 1000px; overflow: hidden; }
.map-canvas { display: block; width: 100%; height: 100%; }
.map-canvas path { vector-effect: non-scaling-stroke; }
.map-canvas use { stroke-linejoin: round; }
.hills { fill: #ebece7; }
.hills-deep { fill: #e4e6e0; }
.contour { fill: none; stroke: #d5d7cf; stroke-width: 2; }
.soil { fill: #e3dfd7; }
.lake { fill: #cbd4dc; }
.water { fill: #9fbacf; }
.park { fill: #9fcf98; }
.meadow { fill: #c8d3bf; }
.bank { fill: none; stroke: #9fcf98; stroke-width: 13; }
.stream { fill: none; stroke: #9fbacf; stroke-width: 5; }
.stream.wide { stroke-width: 9; }
.creek { fill: none; stroke: #9dbcd8; stroke-width: 2; }
.minor { fill: none; stroke: #d3cfcb; stroke-width: 2; }
.trail { fill: none; stroke: #96907c; stroke-width: 2; stroke-dasharray: 6 4; }
.local-case { fill: none; stroke: #b9b7b0; stroke-width: 9; }
.local-fill { fill: none; stroke: #fff9d0; stroke-width: 7; }
.sub-case { fill: none; stroke: #cdb45c; stroke-width: 12; }
.sub-fill { fill: none; stroke: #ffe896; stroke-width: 10; }
.trunk-case { fill: none; stroke: #c49a3c; stroke-width: 13; }
.trunk-fill { fill: none; stroke: #ffcd5c; stroke-width: 11; }
.express-case { fill: none; stroke: #b3693a; stroke-width: 16; }
.express-fill { fill: none; stroke: #fda455; stroke-width: 14; }
.rail-base { fill: none; stroke: #7b87ad; stroke-width: 7; }
.rail-dash { fill: none; stroke: #fff; stroke-width: 4; stroke-dasharray: 28 32; }
.subway { fill: none; stroke-width: 2; stroke-linejoin: round; }
.route-dots {
  fill: none;
  stroke: #ff2a3c;
  stroke-opacity: .68;
  stroke-width: 14;
  stroke-linecap: round;
  stroke-dasharray: 0 28;
}
.map-canvas text { text-anchor: middle; font-weight: 500; }
.place text {
  fill: #4b4034;
  stroke: #fff;
  stroke-width: 4px;
  stroke-linejoin: round;
  paint-order: stroke;
  font-size: 21px;
}
.shop text { fill: #2f2f2f; font-size: 23px; }
.city text { fill: #333; font-size: 30px; }
.district text { fill: #6e5f59; font-size: 25px; }
.green text { fill: #526c5b; font-size: 23px; }
.school text { fill: #48587a; font-size: 22px; }
.road-name text {
  fill: #8b4312;
  stroke: #fda455;
  stroke-width: 4px;
  paint-order: stroke;
  font-size: 19px;
}
.map-canvas .ic-text { fill: #5a5140; font-size: 13px; font-weight: 700; }
.plate rect { fill: #ffe98f; stroke: #a08a50; stroke-width: 2; }
.plate text, .plain { fill: #333; font-size: 19px; }
.route ellipse { fill: #5780e8; stroke: #3f63c4; stroke-width: 2; }
.route text { fill: #fff; font-size: 20px; }
.map-canvas .flag text { fill: #fff; font-size: 22px; font-weight: 700; }
.map-canvas .scale { fill: #000; font-size: 18px; font-weight: 700; text-anchor: start; }
.map-canvas .provider { fill: #000; font-family: "Open Sans", sans-serif; font-size: 24px; text-anchor: start; }

.zoom {
  position: absolute;
  top: 6px;
  right: 6px;
  width: 64px;
  border-radius: 6px;
  background: #fff;
  box-shadow: 0 2px 5px rgba(0, 0, 0, .5);
}
.zoom button { display: grid; place-items: center; width: 64px; height: 62px; }
.zoom svg { width: 24px; height: 24px; fill: none; stroke: #404040; stroke-width: 4; }
.zoom-range {
  display: grid;
  place-items: center;
  height: 248px;
  border: solid #ddd;
  border-width: 2px 0;
  background: linear-gradient(#e8f2ff, #e8f2ff) 50% 46px / 32px 12px no-repeat;
}
.zoom-range input {
  appearance: none;
  writing-mode: vertical-lr;
  direction: rtl;
  width: 32px;
  height: 216px;
  margin: 0;
  background: none;
}
.zoom-range input::-webkit-slider-runnable-track {
  width: 8px;
  height: 216px;
  border-radius: 4px;
  background: linear-gradient(#ccc 54%, #3b9bff 54%);
}
.zoom-range input::-webkit-slider-thumb {
  appearance: none;
  width: 32px;
  height: 12px;
  margin-left: -12px;
  border-radius: 3px;
  background: #3b9bff;
  box-shadow: 0 1px 3px rgba(0, 0, 0, .4);
}
```
